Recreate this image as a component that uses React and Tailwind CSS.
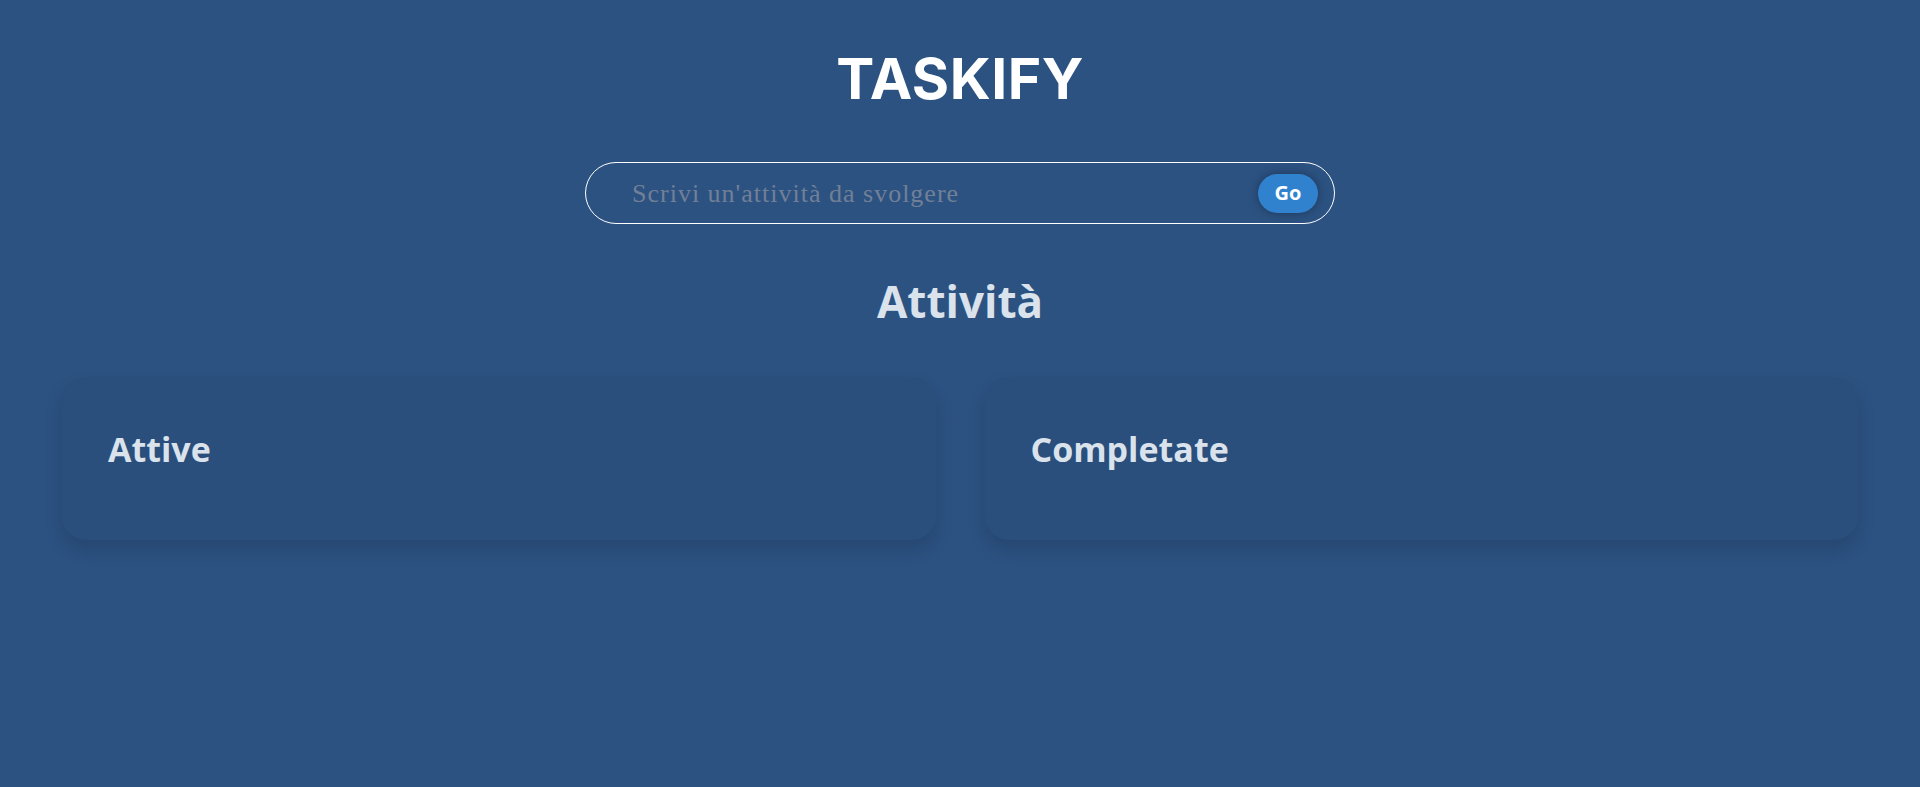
function Card({ title }) {
  return (
    <div className="flex-1 h-[163px] rounded-[24px] bg-[#2a4f7c] shadow-[0_10px_18px_rgba(0,0,0,0.14)] px-[46px] pt-[49px]">
      <h3 className="font-['Open_Sans',sans-serif] text-[34px] leading-[46px] font-bold text-[#dae2ec]">
        {title}
      </h3>
    </div>
  );
}

export default function App() {
  return (
    <div className="min-h-[787px] w-full bg-[#2c5282] flex flex-col items-center">
      <h1 className="mt-[43px] font-['Inter','Noto_Sans',sans-serif] text-[57px] leading-[72px] font-bold text-white tracking-[0.5px]">
        TASKIFY
      </h1>
      <form
        className="mt-[47px] w-[750px] h-[62px] rounded-full border border-white flex items-center pl-[46px] pr-[16px]"
        onSubmit={(e) => e.preventDefault()}
      >
        <input
          className="flex-1 bg-transparent outline-none font-['Liberation_Serif',serif] text-[26px] tracking-[1px] text-white placeholder:text-[#718096]"
          placeholder="Scrivi un'attività da svolgere"
        />
        <button
          type="submit"
          className="w-[60px] h-[39px] rounded-full bg-[#3182ce] font-['Open_Sans',sans-serif] text-white text-[20px] font-bold shadow-[0_0_10px_rgba(0,0,0,0.35)]"
        >
          Go
        </button>
      </form>
      <h2 className="mt-[47px] font-['Open_Sans',sans-serif] text-[44px] leading-[60px] font-bold text-[#dae2ec]">
        Attività
      </h2>
      <div className="mt-[46px] w-full px-[62px] flex gap-[49px]">
        <Card title="Attive" />
        <Card title="Completate" />
      </div>
    </div>
  );
}
